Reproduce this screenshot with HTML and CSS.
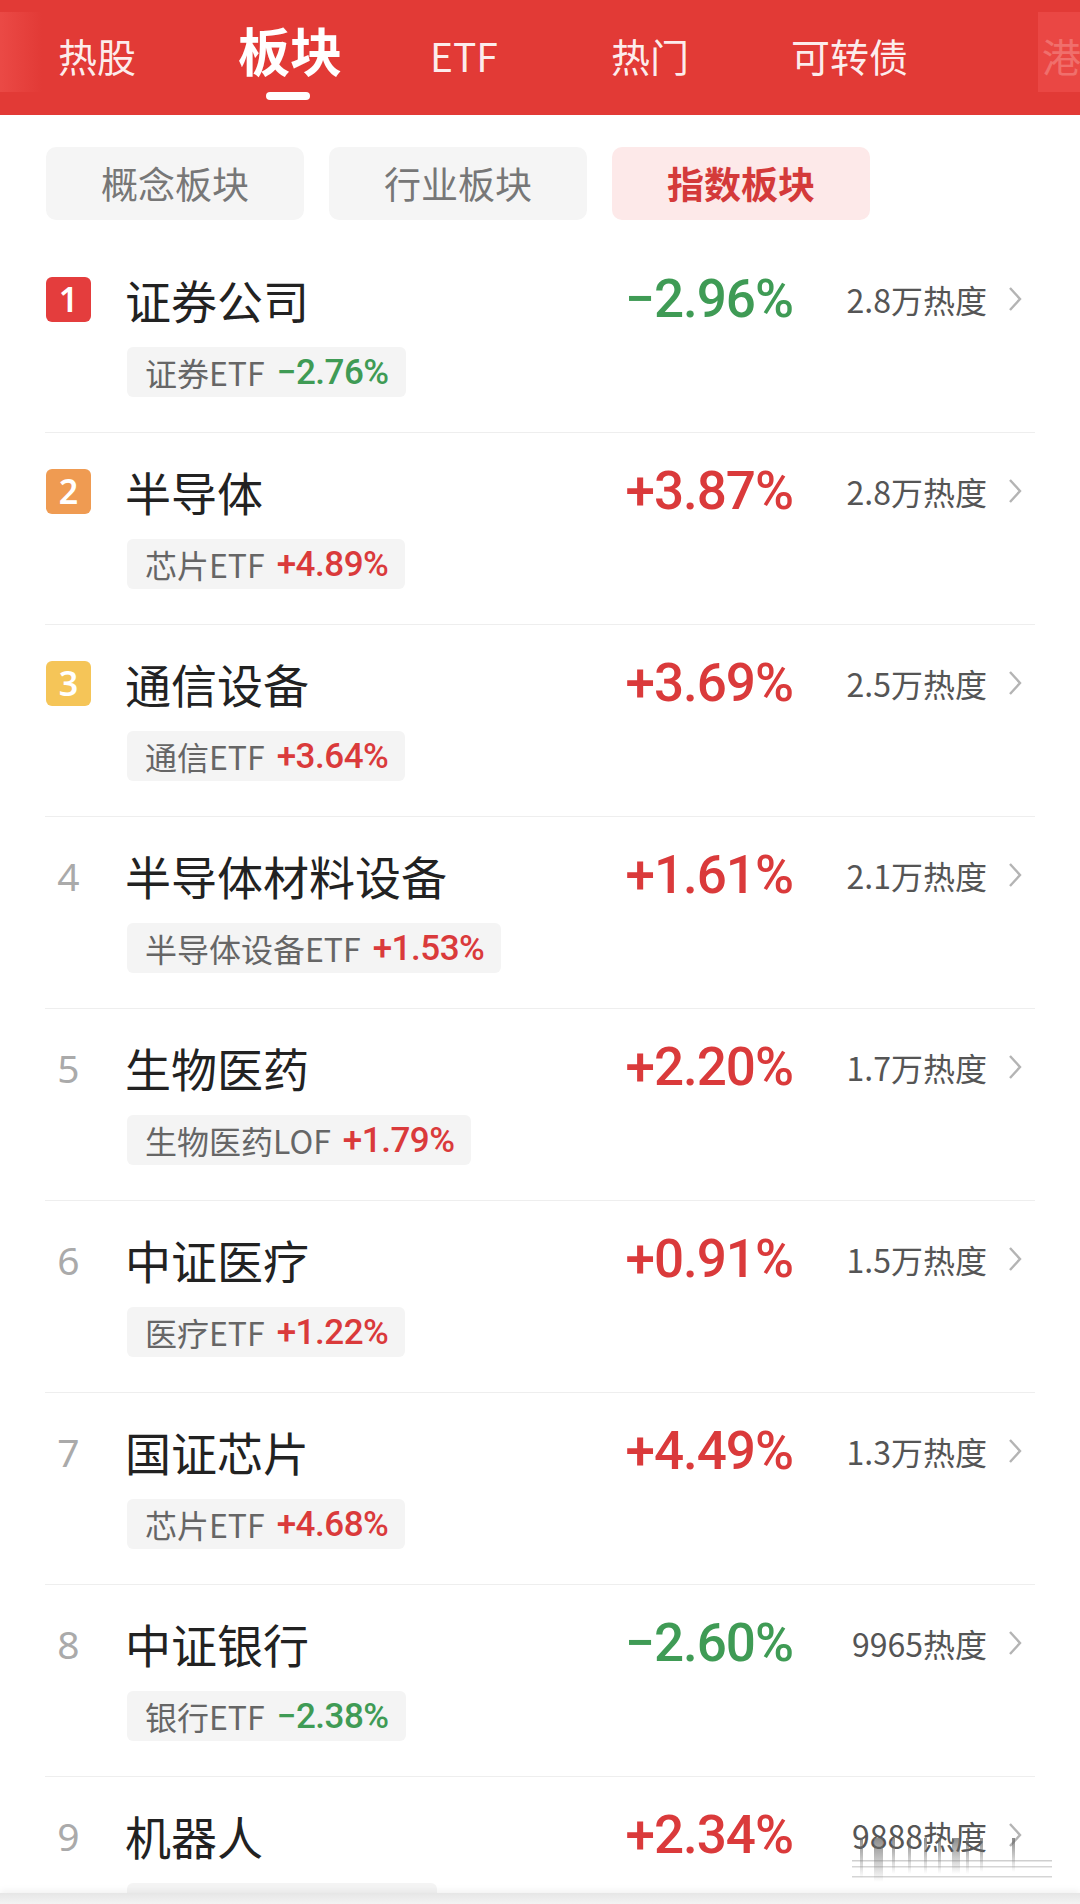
FILE: index.html
```html
<!DOCTYPE html>
<html lang="zh-CN">
<head>
    <meta charset="UTF-8">
    <meta name="viewport" content="width=device-width, initial-scale=1.0">
    <title>板块</title>
    <link rel="stylesheet" href="styles.css">
</head>
<body>

    <div class="topbar">
        <div class="tabs">
            <span class="tab">热股</span>
            <span class="tab active">板块</span>
            <span class="tab etf">ETF</span>
            <span class="tab">热门</span>
            <span class="tab">可转债</span>
            <span class="tab more">港股</span>
        </div>
    </div>

    <div class="segments">
        <div class="seg">概念板块</div>
        <div class="seg">行业板块</div>
        <div class="seg active">指数板块</div>
    </div>

    <div class="list">
        <div class="row">
            <div class="line">
                <span class="rank top1">1</span>
                <span class="name">证券公司</span>
                <span class="pct down">−2.96%</span>
                <span class="heat">2.8万热度</span>
                <svg class="arrow" viewBox="0 0 16 28"><polyline points="3,3 13,14 3,25"/></svg>
            </div>
            <div class="chip">证券ETF<b class="down">−2.76%</b></div>
        </div>
        <div class="row">
            <div class="line">
                <span class="rank top2">2</span>
                <span class="name">半导体</span>
                <span class="pct up">+3.87%</span>
                <span class="heat">2.8万热度</span>
                <svg class="arrow" viewBox="0 0 16 28"><polyline points="3,3 13,14 3,25"/></svg>
            </div>
            <div class="chip">芯片ETF<b class="up">+4.89%</b></div>
        </div>
        <div class="row">
            <div class="line">
                <span class="rank top3">3</span>
                <span class="name">通信设备</span>
                <span class="pct up">+3.69%</span>
                <span class="heat">2.5万热度</span>
                <svg class="arrow" viewBox="0 0 16 28"><polyline points="3,3 13,14 3,25"/></svg>
            </div>
            <div class="chip">通信ETF<b class="up">+3.64%</b></div>
        </div>
        <div class="row">
            <div class="line">
                <span class="rank">4</span>
                <span class="name">半导体材料设备</span>
                <span class="pct up">+1.61%</span>
                <span class="heat">2.1万热度</span>
                <svg class="arrow" viewBox="0 0 16 28"><polyline points="3,3 13,14 3,25"/></svg>
            </div>
            <div class="chip">半导体设备ETF<b class="up">+1.53%</b></div>
        </div>
        <div class="row">
            <div class="line">
                <span class="rank">5</span>
                <span class="name">生物医药</span>
                <span class="pct up">+2.20%</span>
                <span class="heat">1.7万热度</span>
                <svg class="arrow" viewBox="0 0 16 28"><polyline points="3,3 13,14 3,25"/></svg>
            </div>
            <div class="chip">生物医药LOF<b class="up">+1.79%</b></div>
        </div>
        <div class="row">
            <div class="line">
                <span class="rank">6</span>
                <span class="name">中证医疗</span>
                <span class="pct up">+0.91%</span>
                <span class="heat">1.5万热度</span>
                <svg class="arrow" viewBox="0 0 16 28"><polyline points="3,3 13,14 3,25"/></svg>
            </div>
            <div class="chip">医疗ETF<b class="up">+1.22%</b></div>
        </div>
        <div class="row">
            <div class="line">
                <span class="rank">7</span>
                <span class="name">国证芯片</span>
                <span class="pct up">+4.49%</span>
                <span class="heat">1.3万热度</span>
                <svg class="arrow" viewBox="0 0 16 28"><polyline points="3,3 13,14 3,25"/></svg>
            </div>
            <div class="chip">芯片ETF<b class="up">+4.68%</b></div>
        </div>
        <div class="row">
            <div class="line">
                <span class="rank">8</span>
                <span class="name">中证银行</span>
                <span class="pct down">−2.60%</span>
                <span class="heat">9965热度</span>
                <svg class="arrow" viewBox="0 0 16 28"><polyline points="3,3 13,14 3,25"/></svg>
            </div>
            <div class="chip">银行ETF<b class="down">−2.38%</b></div>
        </div>
        <div class="row">
            <div class="line">
                <span class="rank">9</span>
                <span class="name">机器人</span>
                <span class="pct up">+2.34%</span>
                <span class="heat">9888热度</span>
                <svg class="arrow" viewBox="0 0 16 28"><polyline points="3,3 13,14 3,25"/></svg>
            </div>
            <div class="chip">机器人ETF<b class="up">+2.37%</b></div>
        </div>
    </div>

    <!-- watermark smear over the last row -->
    <svg class="smear" viewBox="0 0 210 46">
        <defs>
            <linearGradient id="fade" x1="0" y1="0" x2="0" y2="1">
                <stop offset="0" stop-color="#666" stop-opacity="0.75"/>
                <stop offset="1" stop-color="#666" stop-opacity="0"/>
            </linearGradient>
        </defs>
        <rect x="8" y="0" width="3" height="40" fill="url(#fade)"/>
        <rect x="22" y="0" width="9" height="44" fill="url(#fade)"/>
        <rect x="40" y="0" width="3" height="36" fill="url(#fade)"/>
        <rect x="56" y="0" width="3" height="36" fill="url(#fade)"/>
        <rect x="72" y="0" width="3" height="36" fill="url(#fade)"/>
        <rect x="86" y="0" width="3" height="36" fill="url(#fade)"/>
        <rect x="100" y="0" width="8" height="36" fill="url(#fade)"/>
        <rect x="114" y="0" width="3" height="36" fill="url(#fade)"/>
        <rect x="128" y="0" width="3" height="34" fill="url(#fade)"/>
        <rect x="160" y="0" width="3" height="34" fill="url(#fade)"/>
        <rect x="0" y="22" width="200" height="1.5" fill="#888" opacity="0.4"/>
        <rect x="0" y="28" width="200" height="1.5" fill="#888" opacity="0.35"/>
        <rect x="0" y="38" width="200" height="1.5" fill="#888" opacity="0.35"/>
    </svg>

    <div class="bottom-shade"></div>

</body>
</html>
```

FILE: styles.css
```css
body {
    margin: 0;
    width: 1080px;
    height: 1904px;
    overflow: hidden;
    position: relative;
    background: #fff;
    font-family: "Noto Sans CJK SC", "Noto Sans", sans-serif;
    color: #222;
}

/* top red bar */
.topbar {
    height: 115px;
    background: #e23a36;
    position: relative;
    overflow: hidden;
}
.topbar::before,
.topbar::after {
    content: "";
    position: absolute;
    top: 12px;
    bottom: 23px;
    width: 42px;
    z-index: 2;
}
.topbar::before {
    left: 0;
    background: linear-gradient(to right, rgba(238, 80, 76, 0.7), rgba(238, 80, 76, 0));
}
.topbar::after {
    right: 0;
    background: rgba(236, 76, 72, 0.78);
}
.tabs {
    display: flex;
    align-items: baseline;
    gap: 102px;
    padding: 24px 0 0 58px;
    white-space: nowrap;
}
.tab {
    font-size: 39px;
    line-height: 52px;
    color: rgba(255, 255, 255, 0.92);
    flex-shrink: 0;
}
.tab.etf {
    margin-left: -14px;
    margin-right: 11px;
}
.tab.more {
    margin-left: 32px;
}
.tab.active {
    font-size: 52px;
    font-weight: bold;
    color: #fff;
    position: relative;
}
.tab.active::after {
    content: "";
    position: absolute;
    left: 50%;
    top: 68px;
    width: 44px;
    height: 8px;
    margin-left: -24px;
    border-radius: 4px;
    background: #fff;
}

/* segmented switch */
.segments {
    display: flex;
    gap: 25px;
    padding: 32px 0 0 46px;
}
.seg {
    width: 258px;
    height: 73px;
    line-height: 73px;
    text-align: center;
    border-radius: 10px;
    background: #f5f5f5;
    color: #777;
    font-size: 37px;
}
.seg.active {
    background: #fde9e9;
    color: #d43a3a;
    font-weight: bold;
}

/* list */
.list {
    margin: 21px 45px 0 45px;
}
.row {
    padding: 36px 0 35px 0;
    border-bottom: 1px solid #eeeeee;
}
.line {
    display: flex;
    align-items: center;
    height: 44px;
}
.rank {
    width: 45px;
    height: 45px;
    line-height: 45px;
    margin-left: 1px;
    margin-right: 34px;
    text-align: center;
    font-family: "Noto Sans", sans-serif;
    font-size: 39px;
    color: #aaa;
    flex-shrink: 0;
}
.rank.top1, .rank.top2, .rank.top3 {
    color: #fff;
    font-size: 34px;
    font-weight: 600;
    border-radius: 6px;
}
.rank.top1 { background: #e43d3d; }
.rank.top2 { background: #ef9b52; }
.rank.top3 { background: #f5c558; }

.name {
    flex: 1;
    font-size: 46px;
    color: #222;
}
.pct {
    font-family: Roboto, sans-serif;
    font-weight: 500;
    font-size: 53px;
    letter-spacing: -1px;
    margin-right: 14px;
}
.heat {
    width: 180px;
    text-align: right;
    font-size: 32px;
    color: #555;
}
.arrow {
    width: 16px;
    height: 28px;
    margin: 0 12px 0 20px;
    fill: none;
    stroke: #b4b4b4;
    stroke-width: 2.4;
}

.chip {
    display: inline-flex;
    align-items: center;
    height: 50px;
    margin: 26px 0 0 82px;
    padding: 0 17px 0 18px;
    border-radius: 6px;
    background: #f4f4f4;
    color: #666;
    font-size: 32px;
    white-space: nowrap;
}
.chip b {
    margin-left: 12px;
    font-family: Roboto, sans-serif;
    font-weight: 500;
    font-size: 35px;
    letter-spacing: -0.5px;
}

.up { color: #da3a3b; }
.down { color: #3f9b55; }

/* overlays at the bottom */
.smear {
    position: absolute;
    left: 852px;
    top: 1838px;
    width: 210px;
    height: 46px;
}
.bottom-shade {
    position: absolute;
    left: 0;
    right: 0;
    bottom: 0;
    height: 11px;
    background: linear-gradient(to bottom, #e6e6e6, #f3f3f3);
    box-shadow: 0 -3px 6px rgba(0, 0, 0, 0.05);
}
```
